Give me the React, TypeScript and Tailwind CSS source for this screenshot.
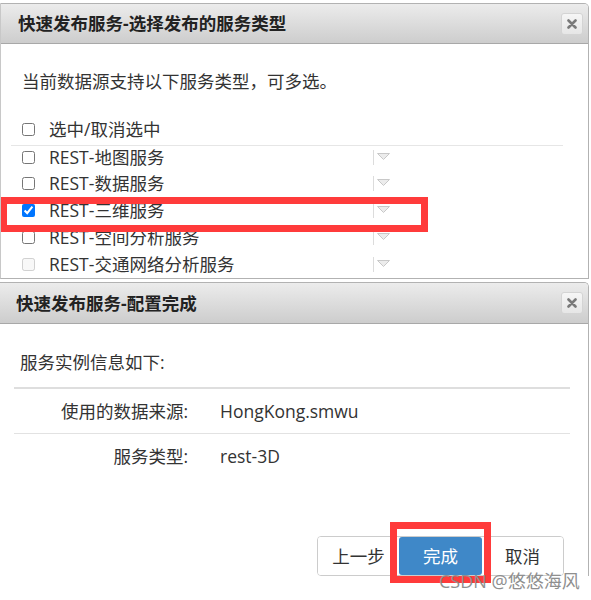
import { FC } from "react";

type Service = { label: string; checked?: boolean; disabled?: boolean; h: string };

const services: Service[] = [
  { label: "REST-地图服务", h: "h-[26px]" },
  { label: "REST-数据服务", h: "h-[27px]" },
  { label: "REST-三维服务", checked: true, h: "h-[27px]" },
  { label: "REST-空间分析服务", h: "h-[27px]" },
  { label: "REST-交通网络分析服务", disabled: true, h: "h-[25px]" },
];

const font = "font-['Open_Sans','Noto_Sans_CJK_SC',sans-serif]";

const CloseButton: FC = () => (
  <div className="flex h-[22px] w-[22px] items-center justify-center rounded-[3px] border border-[#d4d4d4] bg-gradient-to-b from-[#f6f6f6] to-[#e6e6e6]">
    <svg width="10" height="10" viewBox="0 0 10 10">
      <path d="M1.5 1.5 L8.5 8.5 M8.5 1.5 L1.5 8.5" stroke="#7a7a7a" strokeWidth="2.6" strokeLinecap="round" />
    </svg>
  </div>
);

const DialogHeader: FC<{ title: string; cls: string }> = ({ title, cls }) => (
  <div
    className={`flex items-center justify-between border-b border-[#a8a8a8] bg-gradient-to-b from-[#ececec] to-[#cdcdcd] pr-[5px] ${cls}`}
  >
    <span className="text-[17.5px] font-bold text-[#222]">{title}</span>
    <CloseButton />
  </div>
);

const Arrow: FC = () => (
  <div className="flex items-center gap-[3px]">
    <div className="h-[15px] w-px bg-[#dcdcdc]" />
    <svg width="13" height="8" viewBox="0 0 13 8">
      <path d="M0.5 0.5 H12.5 L6.5 6.5 Z" fill="#ececec" stroke="#c8c8c8" strokeWidth="1" />
    </svg>
  </div>
);

const App: FC = () => {
  return (
    <div className={`${font} relative h-[600px] w-[591px] overflow-hidden bg-white text-[17.5px] text-[#333]`}>
      {/* dialog 1 */}
      <div className="mt-[3px] w-[589px] overflow-hidden rounded-tr-[5px] border border-l-[#c8c8c8] border-[#b2b2b2]">
        <DialogHeader title="快速发布服务-选择发布的服务类型" cls="h-[40px] pl-[17px]" />
        <div className="pt-[25px]">
          <p className="pl-[21px] leading-[24px]">当前数据源支持以下服务类型，可多选。</p>
          <label className="mt-[25px] flex h-[22px] items-center gap-[14px] pl-[21px]">
            <input type="checkbox" className="m-0 h-[13px] w-[13px]" readOnly />
            <span>选中/取消选中</span>
          </label>
          <div className="ml-[10px] mt-[5px] w-[552px] border-t border-[#e6e6e6]">
            {services.map((s) => (
              <div key={s.label} className={`flex items-start ${s.h}`}>
                <label className="flex h-[22px] w-[362px] items-center gap-[14px] pl-[11px]">
                  <input
                    type="checkbox"
                    className="m-0 h-[13px] w-[13px]"
                    defaultChecked={s.checked}
                    disabled={s.disabled}
                  />
                  <span>{s.label}</span>
                </label>
                <div className="flex h-[22px] items-center">
                  <Arrow />
                </div>
              </div>
            ))}
          </div>
        </div>
      </div>

      {/* dialog 2 */}
      <div className="mt-[3px] w-[589px] overflow-hidden rounded-tr-[5px] border-t border-r border-[#b2b2b2]">
        <DialogHeader title="快速发布服务-配置完成" cls="h-[41px] pl-[16px]" />
        <div className="pt-[26px]">
          <p className="pl-[20px] leading-[24px]">服务实例信息如下:</p>
          <div className="ml-[14px] mt-[13px] w-[556px] border-t-2 border-[#dedede]">
            <div className="flex h-[45px] items-center border-b border-[#e2e2e2]">
              <span className="w-[174px] text-right">使用的数据来源:</span>
              <span className="pl-[32px]">HongKong.smwu</span>
            </div>
            <div className="flex h-[45px] items-center">
              <span className="w-[174px] text-right">服务类型:</span>
              <span className="pl-[32px]">rest-3D</span>
            </div>
          </div>
          <div className="mr-[24px] mt-[57px] flex justify-end">
            <div className="flex h-[40px] overflow-hidden rounded-[4px] border border-[#cccccc]">
              <button className="w-[81px] bg-white text-[#333]">上一步</button>
              <button className="w-[83px] rounded-[3px] bg-[#3f88c8] text-white">完成</button>
              <button className="w-[81px] bg-white text-[#333]">取消</button>
            </div>
          </div>
        </div>
      </div>

      {/* highlights */}
      <div className="pointer-events-none absolute left-[1px] top-[197px] h-[35px] w-[427px] border-[7px] border-l-[6px] border-[#ff3b3b]" />
      <div className="pointer-events-none absolute left-[390px] top-[522px] h-[61px] w-[101px] border-[7px] border-[#ff3b3b]" />
      <div className="pointer-events-none absolute left-[439px] top-[569px] text-[18px] leading-[24px] text-[#8f8f8f]">
        CSDN @悠悠海风
      </div>
    </div>
  );
};

export default App;
